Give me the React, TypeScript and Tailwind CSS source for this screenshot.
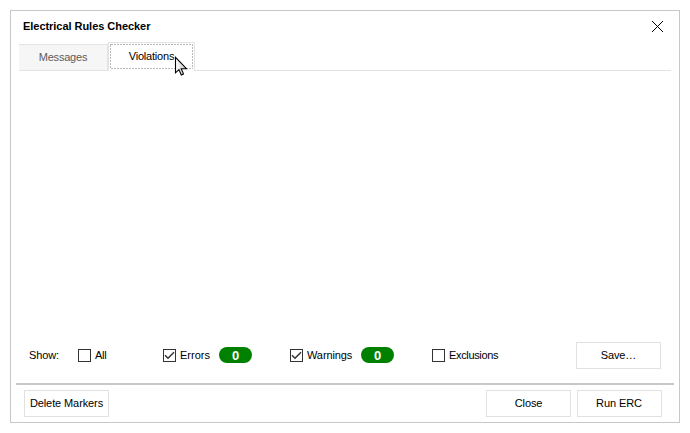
import { useState } from "react";
import type { ReactNode } from "react";

function Button({ children }: { children: ReactNode }) {
  return (
    <button className="flex h-[27px] w-[85px] shrink-0 items-center justify-center border border-[#e1e1e1] bg-white whitespace-nowrap">
      {children}
    </button>
  );
}

function CheckBox({ label, initial = false }: { label: ReactNode; initial?: boolean }) {
  const [checked, setChecked] = useState(initial);
  return (
    <button
      role="checkbox"
      aria-checked={checked}
      onClick={() => setChecked(!checked)}
      className="flex shrink-0 items-center gap-1 whitespace-nowrap"
    >
      <span className="flex size-[13px] items-center justify-center border border-[#333]">
        {checked && (
          <svg width="11" height="11" viewBox="0 0 11 11" fill="none" stroke="#333" strokeWidth="1.5">
            <path d="M1 5.2 4 8.2 10 2.2" />
          </svg>
        )}
      </span>
      {label}
    </button>
  );
}

function Badge({ count }: { count: number }) {
  return (
    <span className="mb-px flex h-4 w-[33px] shrink-0 items-center justify-center rounded-full bg-[#008000] pt-px text-[13px] leading-4 font-bold text-white">
      {count}
    </span>
  );
}

export default function App() {
  return (
    <div className="h-[433px] w-[690px] bg-white p-2.5 font-['Liberation_Sans',Arial,sans-serif] text-[11px] leading-[13px] text-black">
      <div className="flex h-[413px] w-[670px] flex-col border border-[#c8c8c8]">
        <header className="flex h-[31px] shrink-0 items-center justify-between pr-4 pl-3">
          <h1 className="font-bold tracking-[-0.04px]">Electrical Rules Checker</h1>
          <button aria-label="Close window" className="mb-px">
            <svg width="11" height="11" viewBox="0 0 11 11" stroke="#000" strokeWidth="1" fill="none" shapeRendering="crispEdges">
              <path d="M0 0 11 11M11 0 0 11" />
            </svg>
          </button>
        </header>

        <nav className="mr-2 ml-2 flex h-[29px] shrink-0 items-end">
          <button className="flex h-[27px] w-[89px] items-center justify-center border-t border-r border-b border-[#e3e3e3] bg-[#f6f6f6] tracking-[-0.2px] text-[#5c5c5c]">
            Messages
          </button>
          <button className="relative h-[29px] w-[87px] border border-b-0 border-[#e3e3e3] p-px pb-0.5">
            <span className="relative flex h-[25px] w-[83px] items-center justify-center tracking-[-0.2px]">
              <svg className="absolute inset-0" width="83" height="25" fill="none" stroke="#bababa" shapeRendering="crispEdges">
                <rect x="0.5" y="0.5" width="82" height="24" strokeDasharray="2 1" />
              </svg>
              Violations
            </span>
            <svg
              className="absolute top-[13px] left-[65px]"
              width="14"
              height="21"
              viewBox="0 0 14 21"
              stroke="#000"
              strokeWidth="1.1"
            >
              <defs>
                <linearGradient id="pointer" x1="0" y1="0" x2="1" y2="0">
                  <stop offset="0" stopColor="#fff" />
                  <stop offset="1" stopColor="#c4c4c4" />
                </linearGradient>
              </defs>
              <path fill="url(#pointer)" d="M1.5 1.3V16.8L4.9 13.6 7.3 18.9 9.5 17.9 7.2 12.7H12.5Z" />
            </svg>
          </button>
          <span className="h-px flex-1 bg-[#e3e3e3]" />
        </nav>

        <main className="flex-1" />

        <section className="mb-[14px] flex h-[27px] shrink-0 items-center pr-[18px] pl-[18px]">
          <span className="w-[49px] tracking-[-0.1px]">Show:</span>
          <div className="w-[85px]">
            <CheckBox label={<span className="tracking-[-0.3px]">All</span>} />
          </div>
          <div className="flex w-[127px] items-center">
            <div className="w-14">
              <CheckBox label="Errors" initial />
            </div>
            <Badge count={0} />
          </div>
          <div className="flex w-[142px] items-center">
            <div className="w-[71px]">
              <CheckBox label={<span className="tracking-[-0.1px]">Warnings</span>} initial />
            </div>
            <Badge count={0} />
          </div>
          <CheckBox label={<span className="tracking-[-0.35px]">Exclusions</span>} />
          <div className="ml-auto tracking-[-0.15px]">
            <Button>Save…</Button>
          </div>
        </section>

        <footer className="mr-[5px] ml-[5px] flex h-[39px] shrink-0 items-start gap-1.5 border-t-2 border-[#c8c8c8] pt-[5px] pr-3 pl-2 tracking-[-0.1px]">
          <Button>Delete Markers</Button>
          <span className="flex-1" />
          <Button>Close</Button>
          <Button>
            <span className="pr-px">Run ERC</span>
          </Button>
        </footer>
      </div>
    </div>
  );
}
